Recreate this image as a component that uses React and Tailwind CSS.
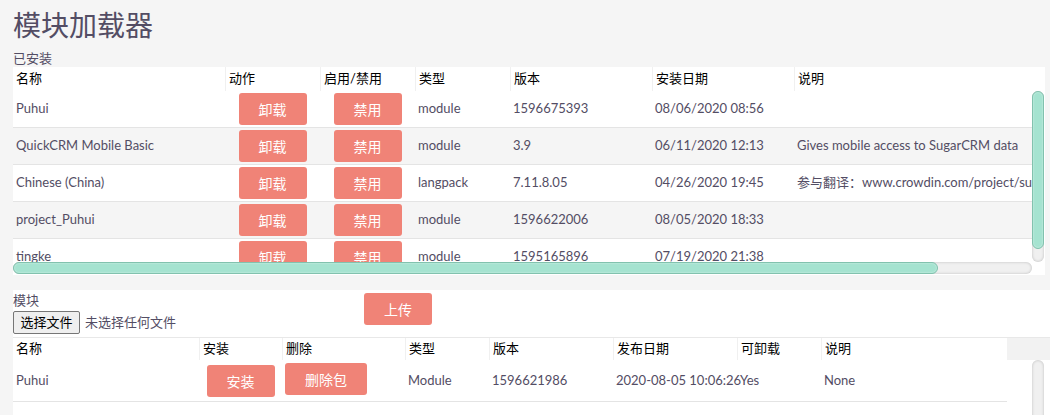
import React from 'react'

const installed = [
  { name: 'Puhui', type: 'module', version: '1596675393', date: '08/06/2020 08:56', desc: '' },
  { name: 'QuickCRM Mobile Basic', type: 'module', version: '3.9', date: '06/11/2020 12:13', desc: 'Gives mobile access to SugarCRM data' },
  { name: 'Chinese (China)', type: 'langpack', version: '7.11.8.05', date: '04/26/2020 19:45', desc: '参与翻译：www.crowdin.com/project/suitecrmtranslations' },
  { name: 'project_Puhui', type: 'module', version: '1596622006', date: '08/05/2020 18:33', desc: '' },
  { name: 'tingke', type: 'module', version: '1595165896', date: '07/19/2020 21:38', desc: '' },
]

function Btn({ children, className = '' }) {
  return (
    <button className={`h-[32px] rounded-[3px] bg-[#f08377] text-[14px] text-white ${className}`}>
      {children}
    </button>
  )
}

function Th({ w, children, first }) {
  return (
    <div className={`${w} h-full pl-[3px] flex items-center text-black ${first ? '' : 'border-l border-[#f0f0f0]'}`}>
      {children}
    </div>
  )
}

// drawn scrollbar pieces (the browser hides native ones)
const track = 'rounded-full bg-[#f0f0f0] shadow-[inset_0_0_3px_rgba(0,0,0,0.22)]'
const thumb = 'rounded-full bg-[#a5e3d0] border border-[#82c2ae] shadow-[inset_0_0_2px_rgba(255,255,255,0.6)]'

export default function App() {
  return (
    <div
      className="min-h-[415px] w-[1050px] bg-[#f5f5f5] pl-[13px] text-[13px] text-[#534d64] overflow-hidden"
      style={{ fontFamily: 'Lato, "Noto Sans CJK SC", sans-serif' }}
    >
      {/* Title */}
      <h1 className="mt-[8px] h-[34px] text-[28px] leading-[34px] text-[#534d64]">模块加载器</h1>
      <div className="mt-[7px] h-[18px] leading-[18px]">已安装</div>

      {/* Installed modules */}
      <div className="w-[1032px] bg-white">
        <div className="flex h-[24px] bg-white">
          <Th w="w-[212px]" first>名称</Th>
          <Th w="w-[95px]">动作</Th>
          <Th w="w-[95px]">启用/禁用</Th>
          <Th w="w-[95px]">类型</Th>
          <Th w="w-[142px]">版本</Th>
          <Th w="w-[142px]">安装日期</Th>
          <Th w="flex-1">说明</Th>
        </div>
        <div className="grid grid-cols-[1019px_13px] grid-rows-[171px_13px]">
          <div className="overflow-hidden">
            <div className="w-[1123px]">
              {installed.map((m, i) => (
                <div
                  key={m.name}
                  className={`flex h-[37px] border-b border-[#e4e4e4] ${i % 2 ? 'bg-[#f5f5f5]' : 'bg-white'}`}
                >
                  <div className="w-[212px] pl-[3px] flex items-center whitespace-nowrap">{m.name}</div>
                  <div className="w-[95px] pt-[2px] flex justify-center">
                    <Btn className="w-[68px]">卸载</Btn>
                  </div>
                  <div className="w-[95px] pt-[2px] flex justify-center">
                    <Btn className="w-[68px]">禁用</Btn>
                  </div>
                  <div className="w-[95px] pl-[3px] flex items-center">{m.type}</div>
                  <div className="w-[142px] pl-[3px] flex items-center">{m.version}</div>
                  <div className="w-[142px] pl-[3px] flex items-center">{m.date}</div>
                  <div className="w-[342px] pl-[3px] flex items-center whitespace-nowrap">{m.desc}</div>
                </div>
              ))}
            </div>
          </div>
          {/* vertical scrollbar */}
          <div className={`mr-[1px] ${track}`}>
            <div className={`h-[158px] ${thumb}`} />
          </div>
          {/* horizontal scrollbar */}
          <div className={`mb-[1px] ${track}`}>
            <div className={`h-full w-[925px] ${thumb}`} />
          </div>
          <div className="bg-white" />
        </div>
      </div>

      <div className="h-[15px]" />

      {/* Upload + package list */}
      <div className="bg-white">
        <div className="flex h-[47px]">
          <div className="w-[351px]">
            <div className="h-[21px] leading-[21px]">模块</div>
            <div className="flex items-center gap-[5px]">
              <button className="h-[23px] w-[67px] rounded-[2px] border border-[#767676] bg-[#efefef] text-[13px] text-black">
                选择文件
              </button>
              <span>未选择任何文件</span>
            </div>
          </div>
          <Btn className="mt-[3px] h-[31px] w-[68px]">上传</Btn>
        </div>

        <div className="flex h-[23px] border-t border-[#e8e8e8]">
          <Th w="w-[186px]" first>名称</Th>
          <Th w="w-[83px]">安装</Th>
          <Th w="w-[123px]">删除</Th>
          <Th w="w-[84px]">类型</Th>
          <Th w="w-[124px]">版本</Th>
          <Th w="w-[124px]">发布日期</Th>
          <Th w="w-[84px]">可卸载</Th>
          <Th w="w-[186px]">说明</Th>
          <div className="flex-1 bg-[#f2f2f2]" />
        </div>
        <div className="flex h-[120px] w-[1032px]">
          <div className="w-[1019px]">
            <div className="flex h-[42px] w-[994px] border-b border-[#e4e4e4]">
              <div className="w-[186px] pl-[3px] flex items-center">Puhui</div>
              <div className="w-[83px] pt-[5px] flex justify-center">
                <Btn className="w-[68px]">安装</Btn>
              </div>
              <div className="w-[123px] pl-[3px] pt-[3px]">
                <Btn className="w-[82px]">删除包</Btn>
              </div>
              <div className="w-[84px] pl-[3px] flex items-center">Module</div>
              <div className="w-[124px] pl-[3px] flex items-center">1596621986</div>
              <div className="w-[124px] pl-[3px] flex items-center whitespace-nowrap">2020-08-05 10:06:26</div>
              <div className="w-[84px] pl-[3px] flex items-center">Yes</div>
              <div className="w-[186px] pl-[3px] flex items-center">None</div>
            </div>
          </div>
          {/* empty vertical scrollbar track */}
          <div className={`w-[12px] ${track}`} />
        </div>
      </div>
    </div>
  )
}
